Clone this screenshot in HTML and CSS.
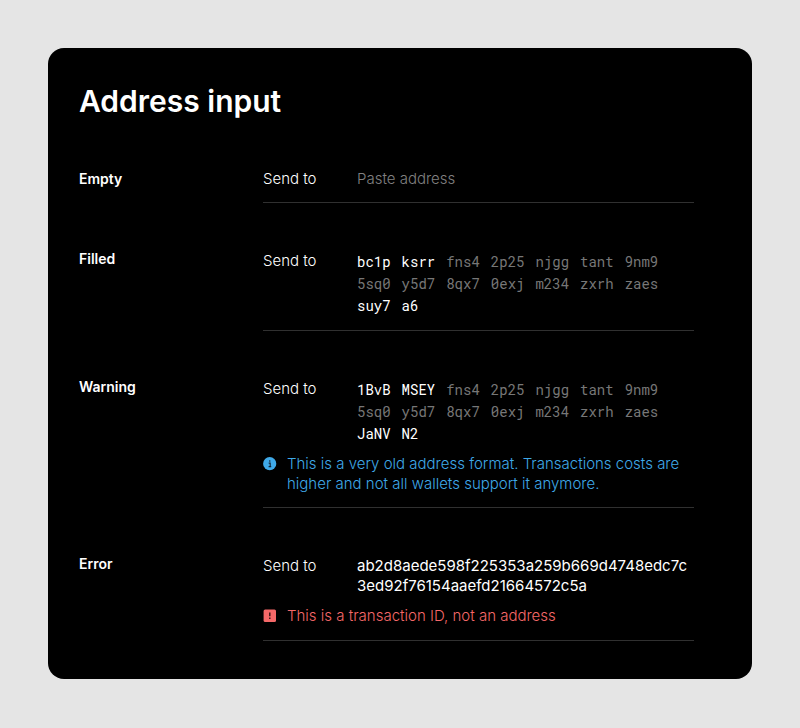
FILE: index.html
```html
<!DOCTYPE html>
<html lang="en">
<head>
<meta charset="utf-8">
<title>Address input</title>
<link rel="stylesheet" href="styles.css">
</head>
<body>
<main class="panel">
  <h1>Address input</h1>

  <section class="row">
    <h2>Empty</h2>
    <div class="field">
      <label for="addr-empty">Send to</label>
      <input id="addr-empty" type="text" placeholder="Paste address">
    </div>
  </section>

  <section class="row filled">
    <h2>Filled</h2>
    <div class="field">
      <span class="label">Send to</span>
      <div class="address"><b>bc1p</b> <b>ksrr</b> <i>fns4</i> <i>2p25</i> <i>njgg</i> <i>tant</i> <i>9nm9</i> <i>5sq0</i> <i>y5d7</i> <i>8qx7</i> <i>0exj</i> <i>m234</i> <i>zxrh</i> <i>zaes</i> <b>suy7</b> <b>a6</b></div>
    </div>
  </section>

  <section class="row filled">
    <h2>Warning</h2>
    <div class="field">
      <span class="label">Send to</span>
      <div class="address"><b>1BvB</b> <b>MSEY</b> <i>fns4</i> <i>2p25</i> <i>njgg</i> <i>tant</i> <i>9nm9</i> <i>5sq0</i> <i>y5d7</i> <i>8qx7</i> <i>0exj</i> <i>m234</i> <i>zxrh</i> <i>zaes</i> <b>JaNV</b> <b>N2</b></div>
      <p class="note info">
        <svg viewBox="0 0 14 14" aria-hidden="true"><circle cx="6.7" cy="6.7" r="6.6" fill="currentColor"/><path d="M5.7 6.1h1.5v3.3M5.6 9.6h2.6" fill="none" stroke="#123" stroke-width="1.1"/><circle cx="6.8" cy="4" r=".8" fill="#123"/></svg>
        <span>This is a very old address format. Transactions costs are higher and not all wallets support it anymore.</span>
      </p>
    </div>
  </section>

  <section class="row raw">
    <h2>Error</h2>
    <div class="field">
      <span class="label">Send to</span>
      <div class="address">ab2d8aede598f225353a259b669d4748edc7c3ed92f76154aaefd21664572c5a</div>
      <p class="note error">
        <svg viewBox="0 0 14 14" aria-hidden="true"><rect x=".6" y=".5" width="12.4" height="12.4" rx="1.5" fill="currentColor"/><path d="M6.8 3.4v3.9M6.8 8.4v1.5" stroke="#311" stroke-width="1.4"/></svg>
        <span>This is a transaction ID, not an address</span>
      </p>
    </div>
  </section>
</main>
</body>
</html>
```
FILE: styles.css
```css
* { box-sizing: border-box; }
body {
  margin: 0;
  padding: 48px;
  background: #e5e5e5;
  color: #fff;
  font: 300 15px/20px Inter, sans-serif;
}
.panel {
  padding: 33px 58px 38px 31px;
  border-radius: 16px;
  background: #000;
}
h1 {
  margin: 0 0 48px;
  font-size: 30px;
  font-weight: 600;
  line-height: 40px;
}
.row {
  display: grid;
  grid-template-columns: 184px 1fr;
  margin-bottom: 46px;
}
.row:last-child { margin-bottom: 0; }
h2 {
  margin: 0;
  font-size: 14px;
  font-weight: 600;
  line-height: 20px;
}
.field {
  display: grid;
  grid-template-columns: 94px 1fr;
  padding-bottom: 13px;
  border-bottom: 1px solid #303030;
}
.filled .field, .raw .field { padding-top: 2px; }
.raw .field { padding-bottom: 14px; }
input {
  width: 100%;
  padding: 0;
  border: 0;
  outline: 0;
  background: none;
  color: inherit;
  font: inherit;
}
input::placeholder { color: #808080; opacity: 1; }
.address {
  font-weight: 400;
  overflow-wrap: anywhere;
}
.filled .address {
  display: flex;
  flex-wrap: wrap;
  column-gap: 11px;
  font: 400 14px/22px "Roboto Mono", "DejaVu Sans Mono", monospace;
}
.address b { font-weight: 400; }
.address i { color: #777; font-style: normal; }
.note {
  grid-column: 1 / -1;
  display: flex;
  gap: 10px;
  margin: 9px 0 0;
}
.raw .note { margin-top: 10px; }
.note svg {
  flex: none;
  width: 14px;
  height: 14px;
  margin-top: 3px;
}
.info { color: #3fa9e8; }
.error { color: #f56868; }
```
